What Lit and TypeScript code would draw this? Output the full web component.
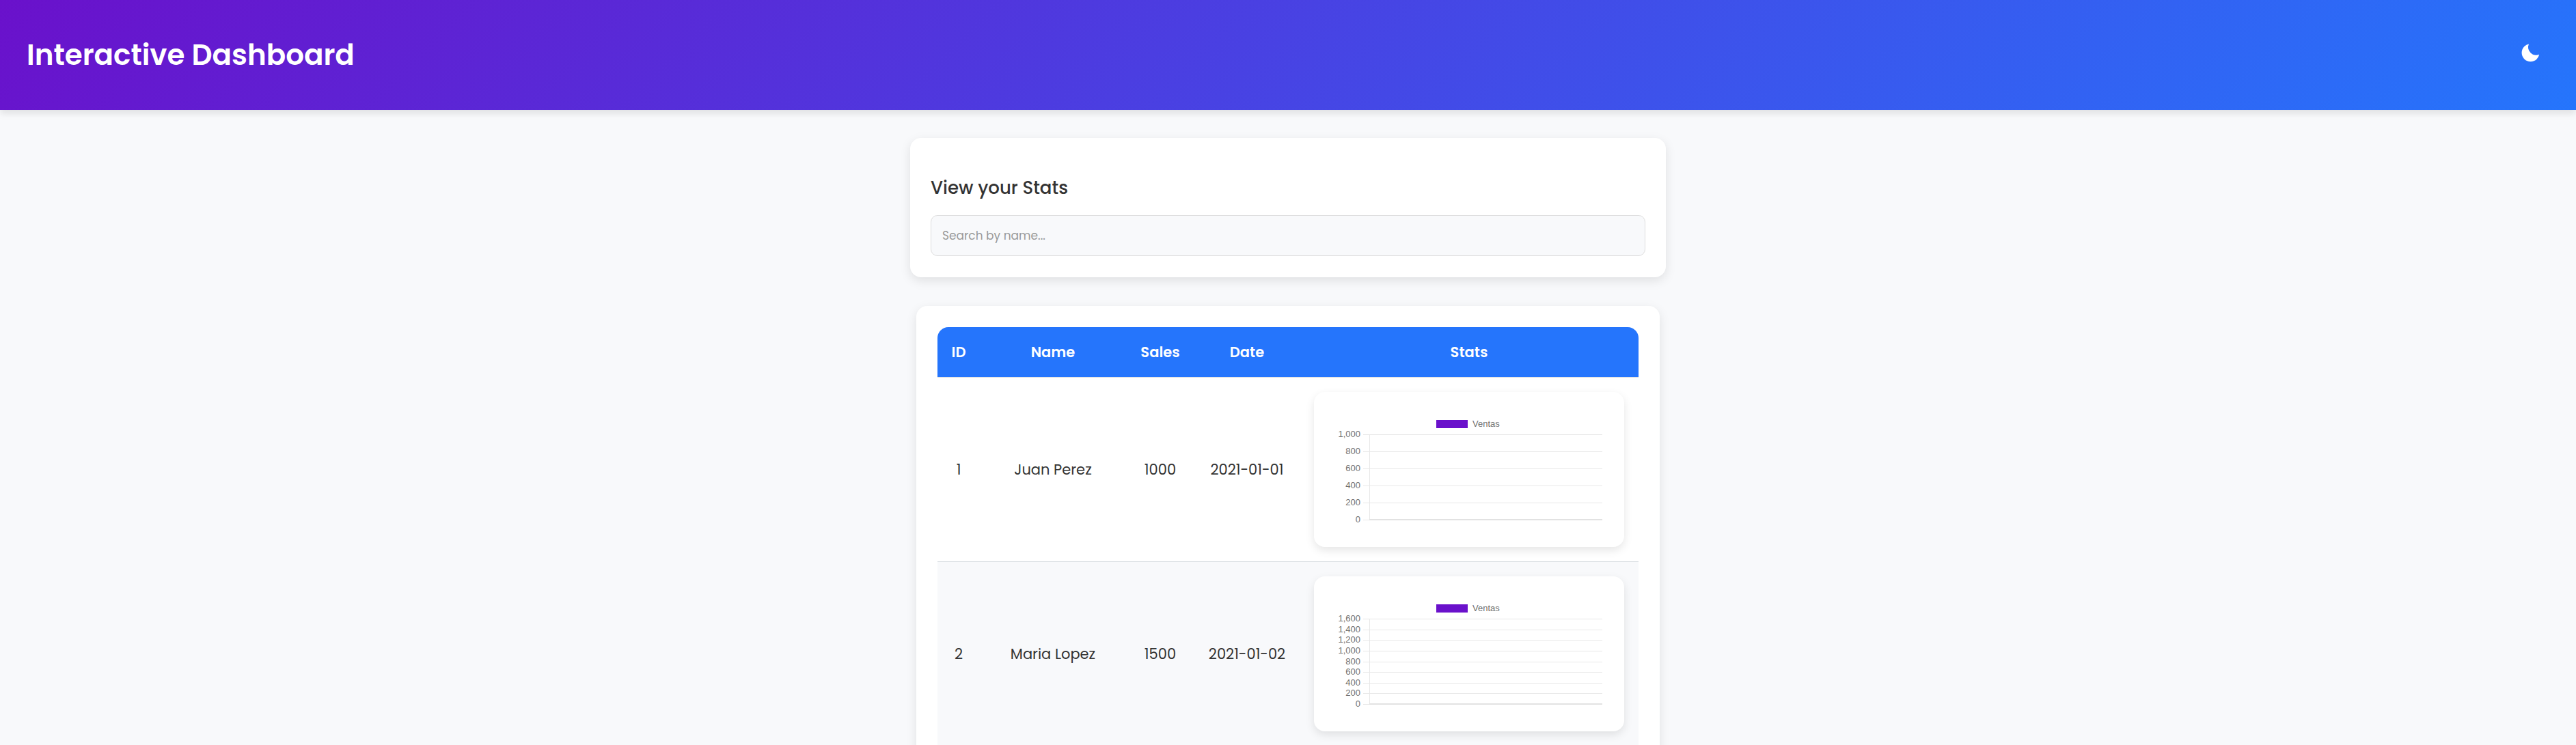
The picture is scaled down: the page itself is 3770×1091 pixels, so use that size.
import { LitElement, html, svg, css } from "lit";
import { customElement, property, state } from "lit/decorators.js";

interface Seller {
  id: number;
  name: string;
  sales: number;
  date: string;
  max: number;
}

const SELLERS: Seller[] = [
  { id: 1, name: "Juan Perez", sales: 1000, date: "2021-01-01", max: 1000 },
  { id: 2, name: "Maria Lopez", sales: 1500, date: "2021-01-02", max: 1600 },
];

@customElement("sales-chart")
class SalesChart extends LitElement {
  @property({ type: Number }) max = 1000;

  static styles = css`
    :host {
      display: block;
      border-radius: 16px;
      background: #fff;
      box-shadow: 0 5px 13px rgba(0, 0, 0, 0.1);
    }
    .plot {
      display: block;
      width: 100%;
      height: auto;
    }
    .grid {
      stroke: #e8e8e8;
      stroke-width: 1;
      shape-rendering: crispEdges;
    }
    .base {
      stroke: #e2e2e2;
      stroke-width: 2;
    }
    .swatch {
      fill: #6a11cb;
    }
    .text {
      fill: #707070;
      font: 13px "Liberation Sans", Arial, sans-serif;
    }
    .tick {
      text-anchor: end;
    }
  `;

  render() {
    const top = 62;
    const bottom = 187;
    const step = 200;
    const count = this.max / step;
    const ticks = Array.from({ length: count + 1 }, (_, i) => i * step);
    return html`<svg class="plot" viewBox="0 0 454 227" role="img" aria-label="Ventas">
      <rect class="swatch" x="179" y="41" width="46" height="12"></rect>
      <text class="text" x="232" y="51">Ventas</text>
      ${ticks.map((value) => {
        const y = Math.round(bottom - ((bottom - top) * value) / this.max);
        return svg`
          <line class="grid" x1="72" y1=${y + 0.5} x2="422" y2=${y + 0.5}></line>
          <text class="text tick" x="68" y=${y + 4}>${value.toLocaleString("en-US")}</text>`;
      })}
      <line class="grid" x1="81" y1=${top} x2="81" y2=${bottom}></line>
      <line class="grid base" x1="81" y1=${bottom} x2="422" y2=${bottom}></line>
    </svg>`;
  }
}

@customElement("app-root")
class AppRoot extends LitElement {
  @state() private query = "";

  static styles = css`
    :host {
      display: block;
      min-height: 100vh;
      background: #f8f9fb;
      color: #333;
      font-family: Poppins, Inter, "Open Sans", sans-serif;
      font-size: 21px;
    }
    * {
      box-sizing: border-box;
    }
    .header {
      display: flex;
      align-items: center;
      justify-content: space-between;
      padding: 49px 39px;
      background: linear-gradient(135deg, #6a11cb, #2575fc);
      box-shadow: 0 5px 10px rgba(0, 0, 0, 0.1);
      color: #fff;
    }
    .title {
      margin: 0;
      font-size: 42px;
      font-weight: 600;
      line-height: 63px;
    }
    .theme {
      display: flex;
      margin: 0;
      padding: 10px 12px 17px;
      border: 0;
      background: none;
      color: inherit;
      cursor: pointer;
    }
    .moon {
      width: 31px;
      height: 31px;
      fill: currentColor;
    }
    .main {
      display: flex;
      flex-direction: column;
      align-items: center;
      gap: 42px;
      padding: 41px 0;
    }
    .card {
      width: 100%;
      border-radius: 16px;
      background: #fff;
      box-shadow: 0 5px 16px rgba(0, 0, 0, 0.1);
    }
    .search {
      display: flex;
      flex-direction: column;
      gap: 20px;
      max-width: 1106px;
      padding: 54px 30px 31px;
    }
    .label {
      margin: 0;
      font-size: 26px;
      font-weight: 500;
      line-height: 39px;
    }
    .input {
      width: 100%;
      padding: 16px;
      border: 1px solid #ddd;
      border-radius: 10px;
      background: #f8f9fb;
      color: inherit;
      font: inherit;
      font-size: 17px;
      line-height: 26px;
    }
    .input::placeholder {
      color: #999;
      opacity: 1;
    }
    .results {
      max-width: 1088px;
      padding: 31px;
    }
    .table {
      width: 100%;
      border-spacing: 0;
      border-radius: 16px 16px 0 0;
      overflow: hidden;
      text-align: center;
      table-layout: fixed;
    }
    .id {
      width: 62px;
    }
    .name {
      width: 214px;
    }
    .sales {
      width: 100px;
    }
    .date {
      width: 154px;
    }
    .th {
      padding: 20px 10px;
      border-bottom: 1px solid #ddd;
      background: #2575fc;
      background-clip: padding-box;
      color: #fff;
      font-weight: 600;
      line-height: 33px;
    }
    .td {
      padding: 21px;
      border-bottom: 1px solid #d9dde2;
      line-height: 33px;
    }
    .td.tight {
      padding: 21px 0;
    }
    .row:nth-child(even) {
      background: #f8f9fb;
    }
  `;

  private onInput(event: Event) {
    this.query = (event.target as HTMLInputElement).value;
  }

  render() {
    const needle = this.query.toLowerCase();
    const rows = SELLERS.filter((s) => s.name.toLowerCase().includes(needle));
    return html`
      <header class="header">
        <h1 class="title">Interactive Dashboard</h1>
        <button class="theme" type="button" aria-label="Dark mode">
          <svg class="moon" viewBox="0 0 24 24" aria-hidden="true">
            <path d="M12 11.807A9.002 9.002 0 0 1 10.049 2a9.942 9.942 0 0 0-5.12 2.735c-3.905 3.905-3.905 10.237 0 14.142 3.906 3.906 10.237 3.905 14.143 0a9.946 9.946 0 0 0 2.735-5.119A9.003 9.003 0 0 1 12 11.807z"></path>
          </svg>
        </button>
      </header>
      <main class="main">
        <section class="card search">
          <h2 class="label"><label for="query">View your Stats</label></h2>
          <input
            class="input"
            id="query"
            type="text"
            placeholder="Search by name..."
            .value=${this.query}
            @input=${this.onInput}
          />
        </section>
        <section class="card results">
          <table class="table">
            <thead>
              <tr>
                <th class="th id" scope="col">ID</th>
                <th class="th name" scope="col">Name</th>
                <th class="th sales" scope="col">Sales</th>
                <th class="th date" scope="col">Date</th>
                <th class="th" scope="col">Stats</th>
              </tr>
            </thead>
            <tbody>
              ${rows.map(
                (s) => html`<tr class="row">
                  <td class="td tight">${s.id}</td>
                  <td class="td tight">${s.name}</td>
                  <td class="td tight">${s.sales}</td>
                  <td class="td tight">${s.date}</td>
                  <td class="td"><sales-chart .max=${s.max}></sales-chart></td>
                </tr>`,
              )}
            </tbody>
          </table>
        </section>
      </main>
    `;
  }
}
